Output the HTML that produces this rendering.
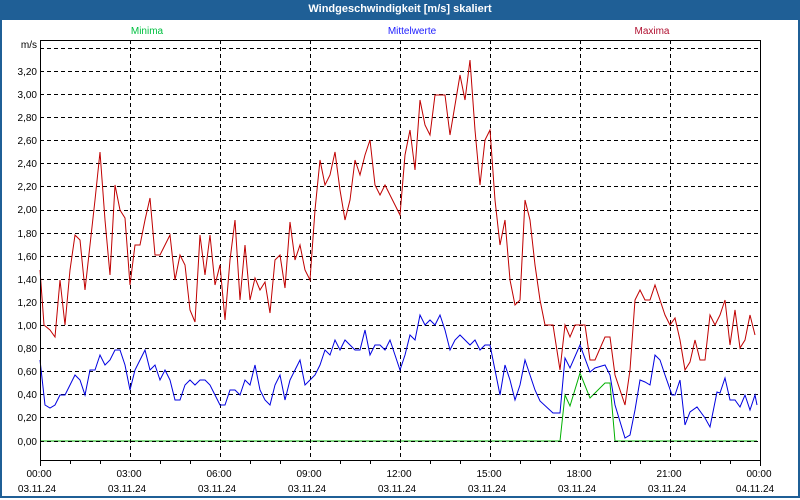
<!DOCTYPE html>
<html><head><meta charset="utf-8"><style>
html,body{margin:0;padding:0;width:800px;height:500px;overflow:hidden;background:#fff}
#w{position:absolute;left:0;top:0;width:796px;height:496px;border:2px solid #1f5f96;border-top:none;background:#fff}
#t{position:absolute;left:0;top:0;width:800px;height:20px;background:#1f5f96;color:#fff;font:bold 11px "Liberation Sans",sans-serif;text-align:center;line-height:19px}
svg{position:absolute;left:0;top:0}
text{font-family:"Liberation Sans",sans-serif;font-size:10px}
</style></head><body>
<div id="w"></div>
<div id="t">Windgeschwindigkeit [m/s] skaliert</div>
<svg width="800" height="500">
<text x="147" y="34" fill="#00c040" text-anchor="middle">Minima</text>
<text x="412" y="34" fill="#2020ff" text-anchor="middle">Mittelwerte</text>
<text x="652" y="34" fill="#b01030" text-anchor="middle">Maxima</text>
<text x="37" y="48" text-anchor="end">m/s</text>
<g text-anchor="end" fill="#000">
<text x="37" y="75">3,20</text><text x="37" y="98">3,00</text><text x="37" y="121">2,80</text><text x="37" y="144">2,60</text><text x="37" y="167">2,40</text><text x="37" y="190">2,20</text><text x="37" y="213">2,00</text><text x="37" y="237">1,80</text><text x="37" y="260">1,60</text><text x="37" y="283">1,40</text><text x="37" y="306">1,20</text><text x="37" y="329">1,00</text><text x="37" y="352">0,80</text><text x="37" y="375">0,60</text><text x="37" y="398">0,40</text><text x="37" y="421">0,20</text><text x="37" y="445">0,00</text>
</g>
<polyline fill="none" stroke="#00b000" stroke-width="1" points="40,441 560,441 565,395 570,406 580,373 590,398 605,383 610,383 615,441 757,441"/>
<g stroke="#000" stroke-dasharray="4,3" stroke-width="1">
<line x1="40" y1="48.5" x2="760" y2="48.5"/><line x1="40" y1="71.5" x2="760" y2="71.5"/><line x1="40" y1="94.5" x2="760" y2="94.5"/><line x1="40" y1="117.5" x2="760" y2="117.5"/><line x1="40" y1="140.5" x2="760" y2="140.5"/><line x1="40" y1="163.5" x2="760" y2="163.5"/><line x1="40" y1="186.5" x2="760" y2="186.5"/><line x1="40" y1="210.5" x2="760" y2="210.5"/><line x1="40" y1="233.5" x2="760" y2="233.5"/><line x1="40" y1="256.5" x2="760" y2="256.5"/><line x1="40" y1="279.5" x2="760" y2="279.5"/><line x1="40" y1="302.5" x2="760" y2="302.5"/><line x1="40" y1="325.5" x2="760" y2="325.5"/><line x1="40" y1="348.5" x2="760" y2="348.5"/><line x1="40" y1="371.5" x2="760" y2="371.5"/><line x1="40" y1="394.5" x2="760" y2="394.5"/><line x1="40" y1="417.5" x2="760" y2="417.5"/><line x1="40" y1="441.5" x2="760" y2="441.5"/>
<line x1="130.5" y1="40" x2="130.5" y2="460"/><line x1="220.5" y1="40" x2="220.5" y2="460"/><line x1="310.5" y1="40" x2="310.5" y2="460"/><line x1="400.5" y1="40" x2="400.5" y2="460"/><line x1="490.5" y1="40" x2="490.5" y2="460"/><line x1="580.5" y1="40" x2="580.5" y2="460"/><line x1="670.5" y1="40" x2="670.5" y2="460"/>
</g>
<polyline fill="none" stroke="#c00000" stroke-width="1" points="40,270 44,325 50,330 55,337 60,280 65,325 70,270 75,235 80,240 85,290 90,245 95,200 100,152 105,220 110,275 115,185 120,210 125,218 130,285 135,245 140,245 145,220 150,198 155,255 160,255 165,245 170,235 175,280 180,255 185,265 190,310 195,322 200,235 205,275 210,235 215,285 220,265 225,320 230,260 235,220 240,300 245,245 250,300 255,278 260,290 265,282 270,313 275,260 280,255 285,288 290,222 295,260 300,245 305,270 310,280 315,210 320,160 325,185 330,175 335,152 340,190 345,220 350,200 355,160 360,175 365,155 370,140 375,185 380,195 385,185 390,195 395,205 400,215 405,155 410,130 415,170 420,100 425,125 430,135 435,95 440,95 445,95 450,135 455,105 460,75 465,100 470,60 475,130 480,185 485,140 490,130 495,200 500,245 505,220 510,280 515,305 520,300 525,200 530,220 535,265 540,300 545,325 553,325 560,370 565,325 570,337 575,325 585,325 590,360 595,360 605,337 610,337 615,375 625,405 630,370 635,300 640,290 645,300 650,300 655,285 660,300 665,315 670,325 675,318 680,340 685,370 690,362 695,340 700,360 705,360 710,315 715,325 720,315 725,300 730,345 735,310 740,348 745,340 750,315 755,335"/>
<polyline fill="none" stroke="#0000e0" stroke-width="1" points="40,360 45,405 50,408 55,405 60,395 65,395 70,385 75,375 80,380 85,395 90,370 95,370 100,355 105,365 110,360 115,350 120,350 125,365 130,390 135,370 140,360 145,350 150,370 155,365 160,380 165,370 170,380 175,400 180,400 185,385 190,380 195,385 200,380 205,380 210,385 215,395 220,405 225,405 230,390 235,390 240,395 245,380 250,385 255,365 260,390 265,400 270,405 275,385 280,375 285,400 290,380 295,370 300,360 305,385 310,380 315,375 320,365 325,350 330,355 335,340 340,350 345,340 350,345 355,350 360,350 365,330 370,355 375,345 380,345 385,350 390,340 395,355 400,370 405,355 410,335 415,340 420,315 425,325 430,320 435,325 440,315 445,330 450,350 455,340 460,335 465,340 470,345 475,340 480,350 485,345 490,345 495,370 500,395 505,365 510,380 515,400 520,385 525,360 530,375 535,390 540,401 553,413 560,413 565,358 570,368 580,345 590,372 595,368 605,365 610,375 615,405 625,438 630,435 635,410 640,380 645,382 650,385 655,355 660,360 665,375 672,395 675,395 680,380 685,425 690,412 697,407 705,418 710,427 717,392 720,393 725,378 730,400 735,400 740,407 745,395 750,410 755,395 757,405"/>
<rect x="40.5" y="40.5" width="720" height="420" fill="none" stroke="#000" stroke-width="1"/>
<g stroke="#000"><line x1="70.5" y1="460" x2="70.5" y2="464"/><line x1="100.5" y1="460" x2="100.5" y2="464"/><line x1="160.5" y1="460" x2="160.5" y2="464"/><line x1="190.5" y1="460" x2="190.5" y2="464"/><line x1="250.5" y1="460" x2="250.5" y2="464"/><line x1="280.5" y1="460" x2="280.5" y2="464"/><line x1="340.5" y1="460" x2="340.5" y2="464"/><line x1="370.5" y1="460" x2="370.5" y2="464"/><line x1="430.5" y1="460" x2="430.5" y2="464"/><line x1="460.5" y1="460" x2="460.5" y2="464"/><line x1="520.5" y1="460" x2="520.5" y2="464"/><line x1="550.5" y1="460" x2="550.5" y2="464"/><line x1="610.5" y1="460" x2="610.5" y2="464"/><line x1="640.5" y1="460" x2="640.5" y2="464"/><line x1="700.5" y1="460" x2="700.5" y2="464"/><line x1="730.5" y1="460" x2="730.5" y2="464"/>
<line x1="40.5" y1="460" x2="40.5" y2="466"/><line x1="760.5" y1="460" x2="760.5" y2="466"/></g>
<g text-anchor="middle">
<text x="39" y="477">00:00</text><text x="129" y="477">03:00</text><text x="219" y="477">06:00</text><text x="309" y="477">09:00</text><text x="399" y="477">12:00</text><text x="489" y="477">15:00</text><text x="579" y="477">18:00</text><text x="669" y="477">21:00</text><text x="759" y="477">00:00</text>
<text x="37" y="492">03.11.24</text><text x="127" y="492">03.11.24</text><text x="217" y="492">03.11.24</text><text x="307" y="492">03.11.24</text><text x="397" y="492">03.11.24</text><text x="487" y="492">03.11.24</text><text x="577" y="492">03.11.24</text><text x="667" y="492">03.11.24</text><text x="755" y="492">04.11.24</text>
</g>
</svg>
</body></html>
